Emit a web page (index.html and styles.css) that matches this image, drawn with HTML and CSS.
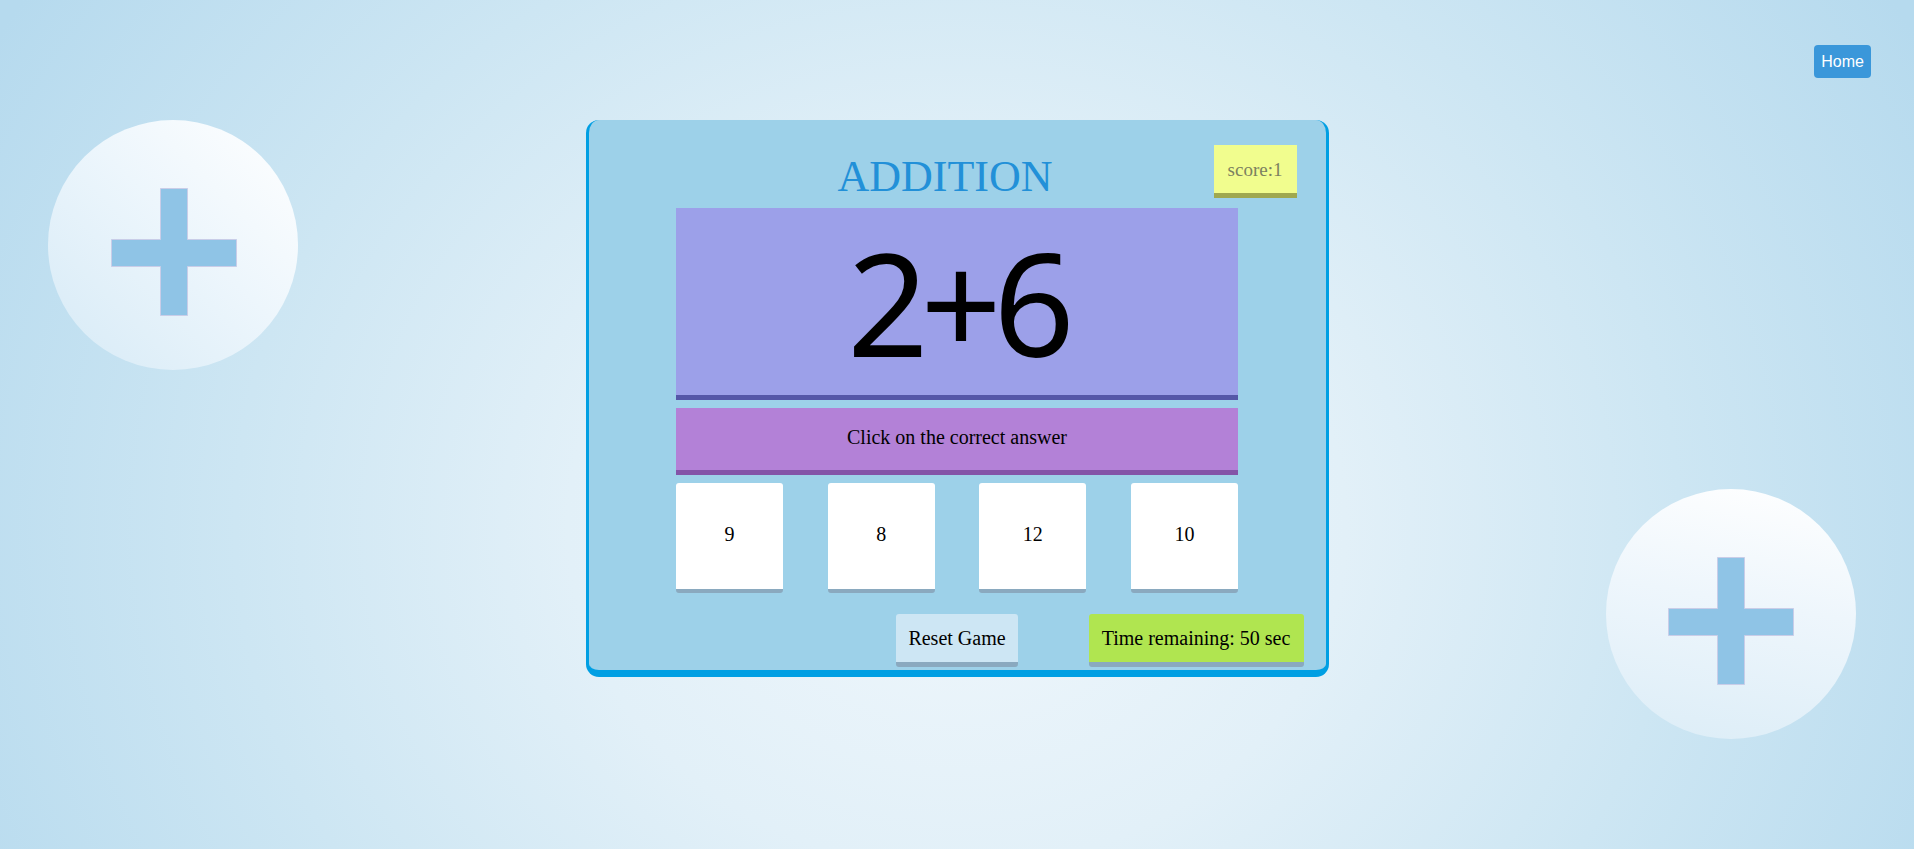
FILE: index.html
```html
<!DOCTYPE html>
<html lang="en">
<head>
<meta charset="utf-8">
<title>Addition</title>
<link rel="stylesheet" href="styles.css">
</head>
<body>
<div class="bubble bubble-left">
  <svg class="plus" width="250" height="250" viewBox="0 0 250 250"><path d="M112.5 68.5 H139.5 V119.5 H188.5 V146.5 H139.5 V195.5 H112.5 V146.5 H63.5 V119.5 H112.5 Z"/></svg>
</div>
<div class="bubble bubble-right">
  <svg class="plus" width="250" height="250" viewBox="0 0 250 250"><path d="M111.5 68.5 H138.5 V119.5 H187.5 V146.5 H138.5 V195.5 H111.5 V146.5 H62.5 V119.5 H111.5 Z"/></svg>
</div>
<nav class="topbar"><a class="home-btn" href="#">Home</a></nav>
<main class="game">
  <div class="game-head">
    <h1 class="game-title">ADDITION</h1>
    <div class="score">score:1</div>
  </div>
  <div class="game-body">
    <div class="question">2+6</div>
    <div class="instruction">Click on the correct answer</div>
    <div class="answers">
      <div class="answer">9</div>
      <div class="answer">8</div>
      <div class="answer">12</div>
      <div class="answer">10</div>
    </div>
  </div>
  <div class="controls">
    <button class="reset-btn">Reset Game</button>
    <div class="timer">Time remaining: 50 sec</div>
  </div>
</main>
</body>
</html>
```
FILE: styles.css
```css
html, body {
  margin: 0;
  padding: 0;
}
body {
  min-height: 849px;
  position: relative;
  overflow: hidden;
  font-family: "Liberation Serif", "Times New Roman", serif;
  background: radial-gradient(ellipse 58% 115% at 50% 62%, #f0f7fc 0%, #e2f0f8 35%, #cde6f3 65%, #b6daee 100%);
}
.bubble {
  position: absolute;
  width: 250px;
  height: 250px;
  border-radius: 50%;
}
.bubble-left {
  left: 48px;
  top: 120px;
  background: linear-gradient(225deg, #ffffff 0%, #edf6fc 45%, #d6eaf6 100%);
}
.bubble-right {
  left: 1606px;
  top: 489px;
  background: linear-gradient(190deg, #ffffff 0%, #eef6fc 45%, #dcedf7 100%);
}
.plus {
  display: block;
}
.plus path {
  fill: #8fc4e6;
  stroke: #c9cde8;
  stroke-width: 1;
  stroke-linejoin: round;
}
.topbar {
  display: flex;
  justify-content: flex-end;
  padding: 45px 43px 0 0;
  position: relative;
}
.home-btn {
  display: block;
  background: #3a97da;
  color: #ffffff;
  text-decoration: none;
  font-family: "Liberation Sans", Arial, sans-serif;
  font-size: 16px;
  line-height: 19px;
  padding: 7px 7px;
  border-radius: 4px;
}
.game {
  position: relative;
  box-sizing: border-box;
  width: 743px;
  margin: 42px auto 0;
  padding: 25px 0 3px;
  background: #9dd1e9;
  border-style: solid;
  border-color: #009fe3;
  border-width: 0 3px 7px 3px;
  border-radius: 13px;
}
.game-head {
  display: flex;
  align-items: flex-start;
  padding: 0 29px 0 88px;
}
.game-title {
  flex: 1;
  margin: 7px 0 0;
  text-align: center;
  font-weight: normal;
  font-size: 44px;
  line-height: 49px;
  color: #2290d8;
}
.score {
  width: 83px;
  height: 48px;
  box-sizing: border-box;
  padding-top: 2px;
  background: #f1fd8e;
  border-bottom: 5px solid #9fa84f;
  height: 53px;
  color: #7c8160;
  font-size: 19px;
  display: flex;
  align-items: center;
  justify-content: center;
}
.game-body {
  width: 562px;
  margin: 7px auto 0;
}
.question {
  height: 187px;
  box-sizing: content-box;
  background: #9ca0e9;
  border-bottom: 5px solid #5557a8;
  display: flex;
  align-items: center;
  justify-content: center;
  padding-top: 0;
  font-family: "Comic Sans MS", "Noto Sans", sans-serif;
  font-size: 142px;
  line-height: 1;
  letter-spacing: -8px;
  color: #000000;
}
.instruction {
  margin-top: 8px;
  height: 58px;
  padding-bottom: 4px;
  background: #b381d7;
  border-bottom: 5px solid #8454a8;
  display: flex;
  align-items: center;
  justify-content: center;
  font-size: 20px;
  color: #000;
}
.answer {
  width: 107px;
  height: 102px;
  padding-bottom: 4px;
  background: #ffffff;
  border-bottom: 4px solid #8aa9bf;
  border-radius: 3px;
  display: flex;
  align-items: center;
  justify-content: center;
  font-size: 20px;
  color: #000;
}
.answers {
  margin-top: 8px;
  display: flex;
  justify-content: space-between;
}
.controls {
  margin-top: 21px;
  display: grid;
  grid-template-columns: 1fr auto 1fr;
  align-items: start;
}
.reset-btn {
  grid-column: 2;
  width: 122px;
  height: 53px;
  margin: 0;
  padding: 0;
  background: #cde6f4;
  border: none;
  border-bottom: 5px solid #8aa9bf;
  border-radius: 3px;
  font-family: "Liberation Serif", "Times New Roman", serif;
  font-size: 20px;
  color: #000;
  box-sizing: border-box;
}
.timer {
  grid-column: 3;
  justify-self: end;
  margin-right: 22px;
  width: 215px;
  height: 48px;
  box-sizing: content-box;
  background: #b0e550;
  border-bottom: 5px solid #8aa9bf;
  border-radius: 3px;
  display: flex;
  align-items: center;
  justify-content: center;
  font-size: 20px;
  white-space: nowrap;
  color: #000;
}
```
